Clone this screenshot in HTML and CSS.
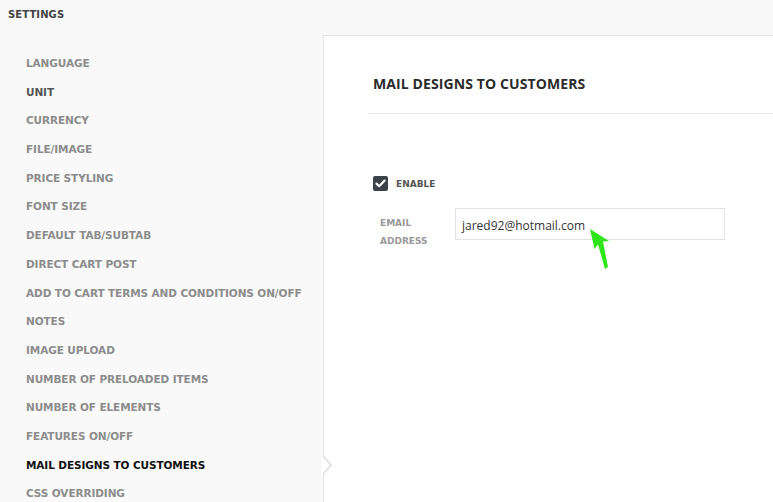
FILE: index.html
```html
<!DOCTYPE html>
<html>
<head>
<meta charset="utf-8">
<link rel="stylesheet" href="styles.css">
</head>
<body>
<div class="page">
  <header class="top">SETTINGS</header>
  <div class="main">
    <nav class="menu">
      <div class="item">LANGUAGE</div>
      <div class="item dark">UNIT</div>
      <div class="item">CURRENCY</div>
      <div class="item">FILE/IMAGE</div>
      <div class="item">PRICE STYLING</div>
      <div class="item">FONT SIZE</div>
      <div class="item">DEFAULT TAB/SUBTAB</div>
      <div class="item">DIRECT CART POST</div>
      <div class="item">ADD TO CART TERMS AND CONDITIONS ON/OFF</div>
      <div class="item">NOTES</div>
      <div class="item">IMAGE UPLOAD</div>
      <div class="item">NUMBER OF PRELOADED ITEMS</div>
      <div class="item">NUMBER OF ELEMENTS</div>
      <div class="item">FEATURES ON/OFF</div>
      <div class="item active">MAIL DESIGNS TO CUSTOMERS</div>
      <div class="item">CSS OVERRIDING</div>
    </nav>
    <section class="panel">
      <span class="chevron"></span>
      <h2 class="title">MAIL DESIGNS TO CUSTOMERS</h2>
      <div class="body">
        <label class="check">
          <span class="box"><svg width="11" height="9" viewBox="0 0 11 9"><path d="M1.5 4.6 L4.2 7.2 L9.6 1.6" fill="none" stroke="#fff" stroke-width="2.2" stroke-linecap="round" stroke-linejoin="round"/></svg></span>
          <span class="check-label">ENABLE</span>
        </label>
        <div class="field">
          <div class="field-label">EMAIL<br>ADDRESS</div>
          <div class="input">jared92@hotmail.com</div>
        </div>
      </div>
      <svg class="arrow" width="32" height="46" viewBox="0 0 32 46"><polygon points="3,2 22,14 16,14.5 21,40 18,42 11,17.5 7.5,22" fill="#2ee61a"/></svg>
    </section>
  </div>
</div>
</body>
</html>
```
FILE: styles.css
```css
html, body { margin: 0; padding: 0; }
body { background: #f9f9f9; width: 773px; height: 502px; overflow: hidden; }
.page { display: flex; flex-direction: column; height: 502px; }
.top {
  flex: 0 0 35px; height: 35px; box-sizing: border-box; padding: 9px 0 0 8px;
  font-family: "DejaVu Sans", sans-serif; font-weight: bold; font-size: 10px;
  color: #444; letter-spacing: 0.1px;
}
.main { display: flex; flex: 1; min-height: 0; }
.menu { width: 323px; padding-top: 20px; box-sizing: border-box; padding-left: 26px; flex-shrink: 0; }
.item {
  height: 28.7px; line-height: 16px;
  font-family: "DejaVu Sans", sans-serif; font-weight: bold; font-size: 10.5px;
  color: #8c8c8c; white-space: nowrap; letter-spacing: -0.1px;
}
.item.dark { color: #555; }
.item.active { color: #111; }
.panel {
  flex: 1; position: relative; background: #fff;
  border-left: 1px solid #e4e4e4; border-top: 1px solid #e4e4e4;
}
.chevron {
  position: absolute; left: -1px; top: 419px; width: 0; height: 0;
  border-top: 10px solid transparent; border-bottom: 10px solid transparent;
  border-left: 9px solid #dcdcdc;
}
.chevron::after {
  content: ""; position: absolute; left: -10px; top: -9px;
  border-top: 9px solid transparent; border-bottom: 9px solid transparent;
  border-left: 8px solid #fff;
}
.title {
  margin: 39px 0 0 45px; padding: 0 0 20px 4px;
  border-bottom: 1px solid #e8e8e8;
  font-family: "Open Sans", sans-serif; font-weight: bold; font-size: 14px;
  line-height: 18px; color: #2b2b2b; letter-spacing: 0.1px;
}
.body { padding: 62px 0 0 49px; }
.check { display: flex; align-items: center; gap: 8px; }
.box {
  width: 15px; height: 15px; border-radius: 2px; background: #3b424a;
  display: flex; align-items: center; justify-content: center;
}
.check-label {
  font-family: "DejaVu Sans", sans-serif; font-weight: bold; font-size: 9px;
  color: #555;
}
.field { display: flex; margin-top: 17px; }
.field-label {
  width: 82px; padding: 6px 0 0 7px; box-sizing: border-box;
  font-family: "DejaVu Sans", sans-serif; font-weight: bold; font-size: 9px;
  line-height: 18px; color: #999;
}
.input {
  width: 270px; height: 32px; box-sizing: border-box; border: 1px solid #e3e3e3;
  padding: 2px 6px 0; line-height: 30px;
  font-family: "Open Sans", sans-serif; font-size: 12px; color: #333;
}
.arrow { position: absolute; left: 263px; top: 191px; }
```
